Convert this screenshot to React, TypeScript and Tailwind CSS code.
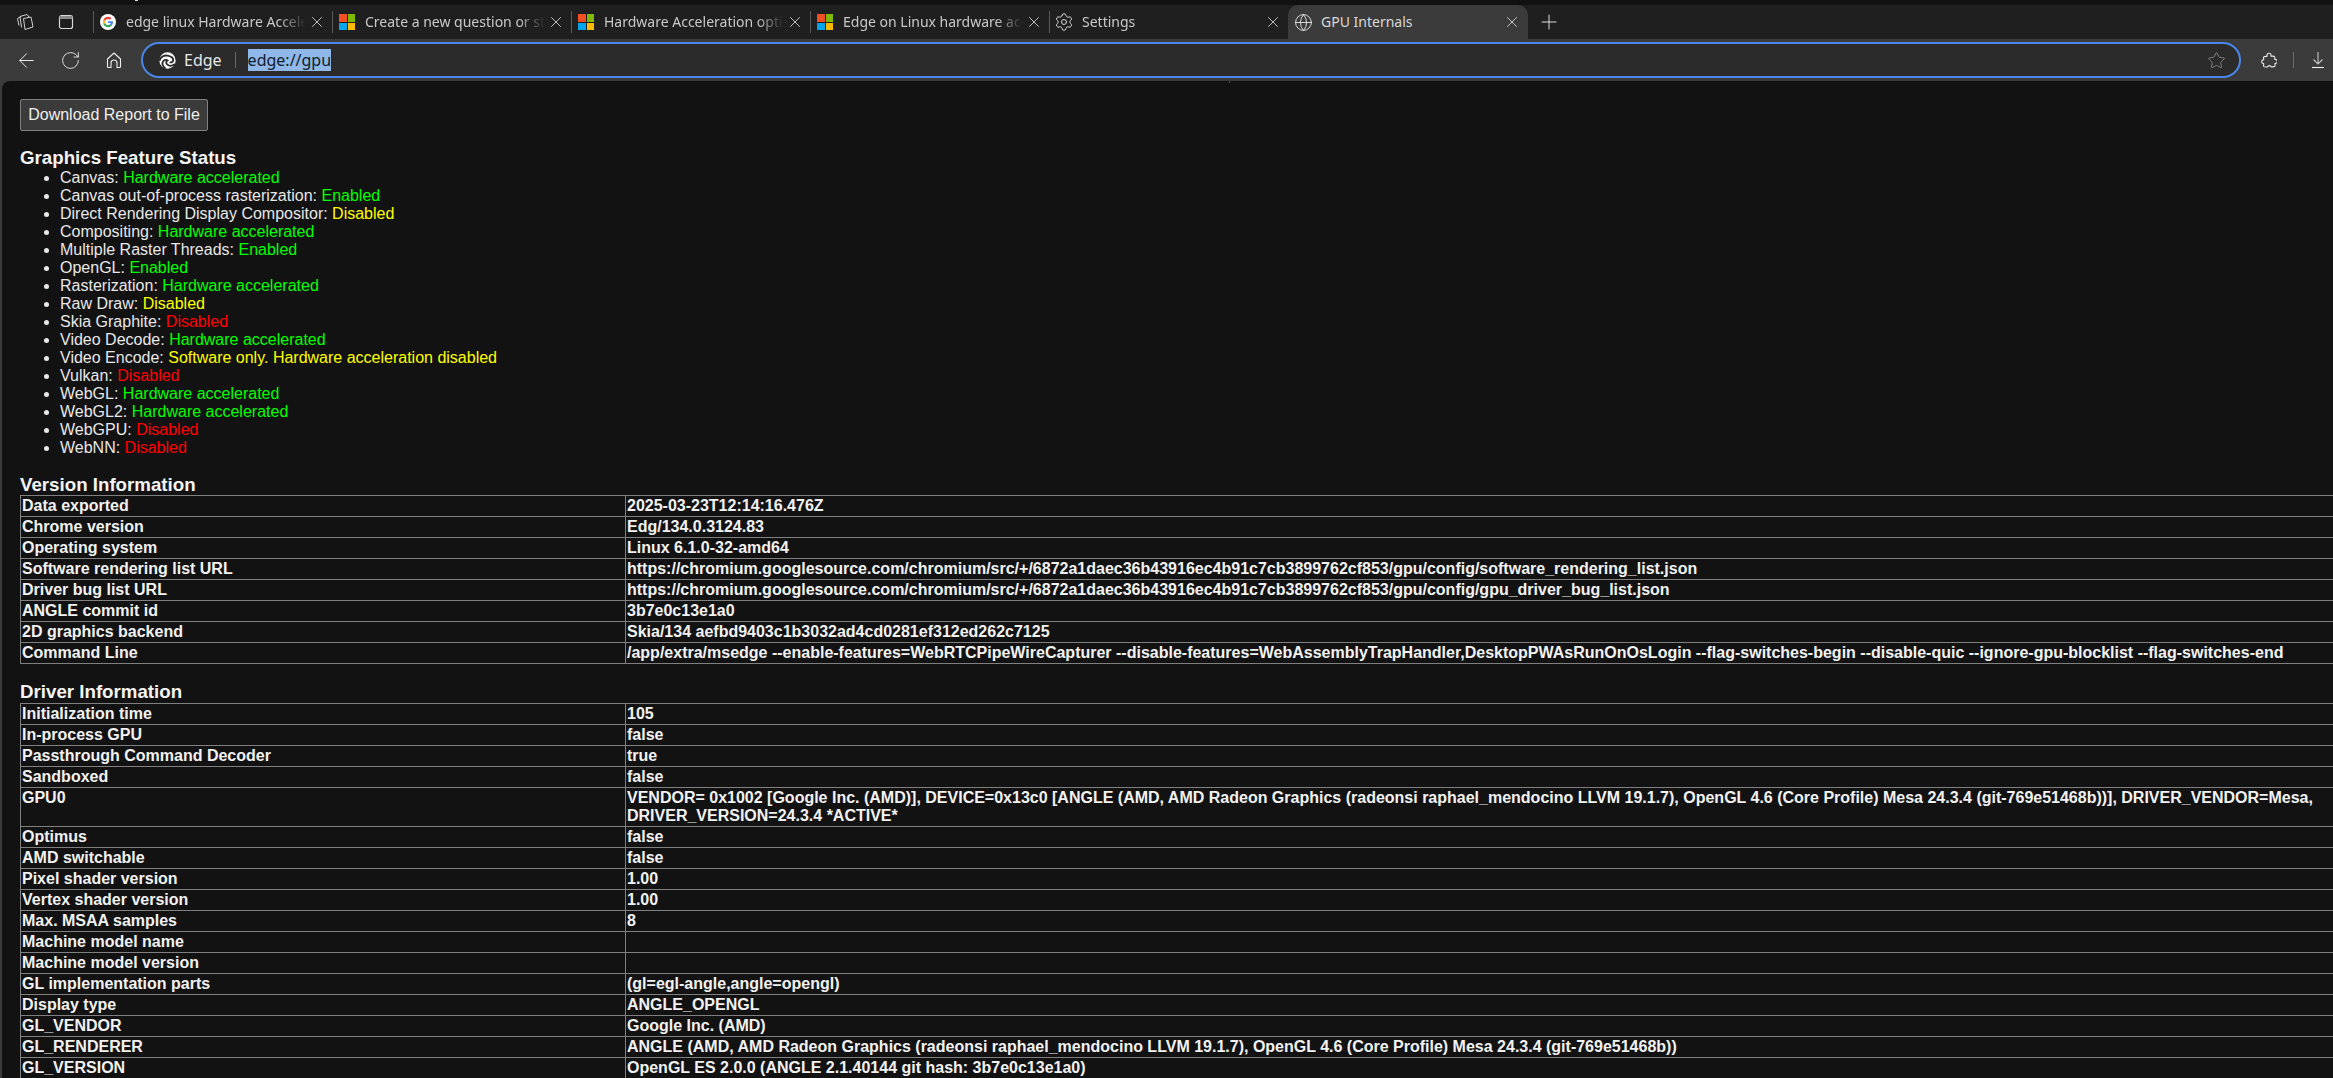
import { ArrowLeft, Globe, Plus, RotateCw, Settings, Star, X } from 'lucide-react';

const features = [
  ['Canvas', 'Hardware accelerated', 'g'],
  ['Canvas out-of-process rasterization', 'Enabled', 'g'],
  ['Direct Rendering Display Compositor', 'Disabled', 'y'],
  ['Compositing', 'Hardware accelerated', 'g'],
  ['Multiple Raster Threads', 'Enabled', 'g'],
  ['OpenGL', 'Enabled', 'g'],
  ['Rasterization', 'Hardware accelerated', 'g'],
  ['Raw Draw', 'Disabled', 'y'],
  ['Skia Graphite', 'Disabled', 'r'],
  ['Video Decode', 'Hardware accelerated', 'g'],
  ['Video Encode', 'Software only. Hardware acceleration disabled', 'y'],
  ['Vulkan', 'Disabled', 'r'],
  ['WebGL', 'Hardware accelerated', 'g'],
  ['WebGL2', 'Hardware accelerated', 'g'],
  ['WebGPU', 'Disabled', 'r'],
  ['WebNN', 'Disabled', 'r'],
];

const statusColor: Record<string, string> = {
  g: 'text-[#00ff00]',
  y: 'text-[#ffff00]',
  r: 'text-[#ff0000]',
};

const versionInfo = [
  ['Data exported', '2025-03-23T12:14:16.476Z'],
  ['Chrome version', 'Edg/134.0.3124.83'],
  ['Operating system', 'Linux 6.1.0-32-amd64'],
  ['Software rendering list URL', 'https://chromium.googlesource.com/chromium/src/+/6872a1daec36b43916ec4b91c7cb3899762cf853/gpu/config/software_rendering_list.json'],
  ['Driver bug list URL', 'https://chromium.googlesource.com/chromium/src/+/6872a1daec36b43916ec4b91c7cb3899762cf853/gpu/config/gpu_driver_bug_list.json'],
  ['ANGLE commit id', '3b7e0c13e1a0'],
  ['2D graphics backend', 'Skia/134 aefbd9403c1b3032ad4cd0281ef312ed262c7125'],
  ['Command Line', '/app/extra/msedge --enable-features=WebRTCPipeWireCapturer --disable-features=WebAssemblyTrapHandler,DesktopPWAsRunOnOsLogin --flag-switches-begin --disable-quic --ignore-gpu-blocklist --flag-switches-end'],
];

const driverInfo = [
  ['Initialization time', '105'],
  ['In-process GPU', 'false'],
  ['Passthrough Command Decoder', 'true'],
  ['Sandboxed', 'false'],
  ['GPU0', 'VENDOR= 0x1002 [Google Inc. (AMD)], DEVICE=0x13c0 [ANGLE (AMD, AMD Radeon Graphics (radeonsi raphael_mendocino LLVM 19.1.7), OpenGL 4.6 (Core Profile) Mesa 24.3.4 (git-769e51468b))], DRIVER_VENDOR=Mesa, DRIVER_VERSION=24.3.4 *ACTIVE*'],
  ['Optimus', 'false'],
  ['AMD switchable', 'false'],
  ['Pixel shader version', '1.00'],
  ['Vertex shader version', '1.00'],
  ['Max. MSAA samples', '8'],
  ['Machine model name', ''],
  ['Machine model version', ''],
  ['GL implementation parts', '(gl=egl-angle,angle=opengl)'],
  ['Display type', 'ANGLE_OPENGL'],
  ['GL_VENDOR', 'Google Inc. (AMD)'],
  ['GL_RENDERER', 'ANGLE (AMD, AMD Radeon Graphics (radeonsi raphael_mendocino LLVM 19.1.7), OpenGL 4.6 (Core Profile) Mesa 24.3.4 (git-769e51468b))'],
  ['GL_VERSION', 'OpenGL ES 2.0.0 (ANGLE 2.1.40144 git hash: 3b7e0c13e1a0)'],
];

const GoogleIcon = () => (
  <svg width="16" height="16" viewBox="0 0 48 48">
    <circle cx="24" cy="24" r="24" fill="#fff" />
    <g transform="translate(8.5 8.5) scale(0.645)">
      <path fill="#EA4335" d="M24 9.5c3.5 0 6.7 1.2 9.2 3.6l6.9-6.9C35.9 2.4 30.5 0 24 0 14.6 0 6.5 5.4 2.6 13.2l8 6.2C12.5 13.7 17.800 9.500 24 9.500z" />
      <path fill="#4285F4" d="M47 24.500c0-1.600-.1-3.100-.4-4.500H24v9h13c-.6 3-2.300 5.500-4.800 7.200l7.700 6c4.500-4.200 7.100-10.300 7.100-17.700z" />
      <path fill="#FBBC05" d="M10.600 28.600c-.5-1.400-.8-3-.8-4.600s.3-3.200.8-4.600l-8-6.200C.9 16.500 0 20.100 0 24s.9 7.500 2.600 10.800l8-6.200z" />
      <path fill="#34A853" d="M24 48c6.500 0 11.900-2.100 15.900-5.800l-7.700-6c-2.200 1.400-4.900 2.300-8.200 2.300-6.200 0-11.500-4.200-13.400-9.900l-8 6.200C6.500 42.600 14.600 48 24 48z" />
    </g>
  </svg>
);

const MsIcon = () => (
  <div className="grid h-4 w-4 grid-cols-2 gap-px">
    <div className="bg-[#f25022]" />
    <div className="bg-[#7fba00]" />
    <div className="bg-[#00a4ef]" />
    <div className="bg-[#ffb900]" />
  </div>
);

const EdgeLogo = () => (
  <svg width="17" height="17" viewBox="0 0 24 24">
    <circle cx="12" cy="12" r="11.500" fill="#fff" />
    <path d="M0.800 12.500C2 7 7 4.500 12 5c5 .6 8.500 3.500 8 7-.3 2-2.500 3-5 2.600" fill="none" stroke="#2b2b2b" strokeWidth="2.600" />
    <path d="M9 23c-4-3-5-7-3-10 1.500-2 4.500-2.500 6-1-2 1-2.500 3.500-.5 5.500 2.500 2.500 7 2.500 11-.5" fill="none" stroke="#2b2b2b" strokeWidth="2.600" />
  </svg>
);

const tabs = [
  { title: 'edge linux Hardware Acceleration', icon: <GoogleIcon /> },
  { title: 'Create a new question or start a discussion', icon: <MsIcon /> },
  { title: 'Hardware Acceleration options', icon: <MsIcon /> },
  { title: 'Edge on Linux hardware acceleration', icon: <MsIcon /> },
  { title: 'Settings', icon: <Settings size={20} strokeWidth={1.200} className="shrink-0 text-[#d6d6d6]" /> },
];

const Tab = ({ title, icon }: { title: string; icon: React.ReactNode }) => (
  <div className="flex h-[34px] w-[239px] shrink-0 items-center">
    <div className="h-[22px] w-px bg-[#5a5a5a]" />
    <div className="ml-[6px] flex h-4 w-4 items-center justify-center">{icon}</div>
    <div className="ml-[10px] w-[180px] overflow-hidden whitespace-nowrap text-[14px] text-[#c9c9c9] [mask-image:linear-gradient(to_right,black_85%,transparent_100%)]">
      {title}
    </div>
    <X size={18} strokeWidth={1.100} className="ml-[2px] shrink-0 text-[#e0e0e0]" />
  </div>
);

const InfoTable = ({ rows }: { rows: string[][] }) => (
  <table className="w-[2400px] table-fixed font-bold text-[#f2f2f2]">
    <colgroup>
      <col className="w-[605px]" />
      <col />
    </colgroup>
    <tbody>
      {rows.map(([label, value]) => (
        <tr key={label}>
          <td className="h-[21px] border border-[#808080] p-px align-top">{label}</td>
          <td className="h-[21px] border border-[#808080] p-px align-top">{value}</td>
        </tr>
      ))}
    </tbody>
  </table>
);

const App = () => {
  return (
    <div className="relative flex h-screen w-full flex-col overflow-hidden bg-[#121212] font-['Liberation_Sans',Arial,sans-serif] text-[16px] leading-[18px] text-[#e8e8e8]">
      {/* Tab strip */}
      <div className="h-[5px] shrink-0 bg-[#111111]" />
      <div className="flex h-[34px] shrink-0 items-center bg-[#1f1f1f] font-['Noto_Sans',sans-serif]">
        <div className="flex h-full w-[45px] items-center justify-center pl-[4px] text-[#cfcfcf]">
          <svg width="18" height="18" viewBox="0 0 18 18" fill="none" stroke="currentColor" strokeWidth="1" strokeLinejoin="round">
            <path d="M7.500 5.500L15 4l2 10-8 2.500z" />
            <path d="M5.500 14.500L4 3.500l7-2 2 2.500" />
            <path d="M3 12.500L1.500 5.500 5 3.500" />
          </svg>
        </div>
        <div className="flex h-full w-[42px] items-center justify-center text-[#d8d8d8]">
          <svg width="16" height="16" viewBox="0 0 16 16" fill="none" stroke="currentColor" strokeWidth="1.200">
            <rect x="1.500" y="1.500" width="13" height="13" rx="2" />
            <path d="M1.500 3.500h13" stroke="#8a8a8a" strokeWidth="3" />
          </svg>
        </div>
        <div className="w-[6px]" />
        {tabs.map(t => (
          <Tab key={t.title} title={t.title} icon={t.icon} />
        ))}
        {/* Active tab */}
        <div className="flex h-[34px] w-[240px] shrink-0 items-center rounded-t-[10px] bg-[#3b3b3b]">
          <Globe size={19} strokeWidth={1.100} className="ml-[6px] shrink-0 text-[#ededed]" />
          <div className="ml-[8px] w-[178px] overflow-hidden whitespace-nowrap text-[14px] text-[#d8d8d8]">GPU Internals</div>
          <X size={18} strokeWidth={1.100} className="ml-[4px] shrink-0 text-[#e0e0e0]" />
        </div>
        <Plus size={24} strokeWidth={0.900} className="ml-[9px] shrink-0 text-[#f0f0f0]" />
      </div>

      {/* Toolbar */}
      <div className="flex h-[42px] shrink-0 items-center bg-[#3b3b3b] pl-[4px]">
        <div className="flex w-[44px] justify-center">
          <ArrowLeft size={23} strokeWidth={1} className="text-[#f0f0f0]" />
        </div>
        <div className="flex w-[44px] justify-center">
          <RotateCw size={21} strokeWidth={1} className="text-[#eeeeee]" />
        </div>
        <div className="flex w-[44px] justify-center">
          <svg width="16" height="17" viewBox="0 0 16 17" fill="none" stroke="#f0f0f0" strokeWidth="1.100" strokeLinejoin="round">
            <path d="M1.500 7L8 1l6.500 6v7.500a1 1 0 0 1-1 1H11V11a3 3 0 0 0-6 0v4.500H2.500a1 1 0 0 1-1-1z" />
          </svg>
        </div>
        <div className="ml-[5px] flex h-[36px] flex-1 items-center rounded-full border-[2.500px] border-[#4a86e8] bg-[#2b2b2b] font-['Noto_Sans',sans-serif]">
          <div className="ml-[16px] flex w-[17px] items-center">
            <EdgeLogo />
          </div>
          <span className="ml-[8px] text-[16px] text-[#e6e6e6]">Edge</span>
          <div className="ml-[13px] h-[16px] w-px bg-[#6a6a6a]" />
          <span className="ml-[12px] bg-[#8fb7e8] text-[16px] leading-[22px] text-[#10202f]">edge://gpu</span>
          <Star size={19} strokeWidth={1.100} className="ml-auto mr-[13px] text-[#8a8a8a]" />
        </div>
        <div className="flex w-[92px] shrink-0 items-center">
          <svg width="16" height="17" viewBox="0 0 16 17" fill="none" stroke="#ededed" strokeWidth="1.100" strokeLinejoin="round" className="ml-[20px]">
            <path d="M6 3.200a2 2 0 0 1 4 0c0 .4-.2.7-.2 1 .1.300 3.400-.8 3.900.9.300 1 .1 2.300.1 2.400a2 2 0 1 1 .2 3.900c0 .3.300 2.300-.3 3-.6.700-2.900.3-3.400.5-.5-1.700-3.300-1.700-3.600 0-.8 0-3.200.4-3.900-.4-.500-.6 0-2.400-.1-2.900-.9-.1-2-.6-2-1.900 0-1.300 1.100-1.900 2-1.900 0-.6-.400-2.400.1-3 .5-.6 3-.3 3.300-.5-.1-.4-.1-.7-.1-1z" />
          </svg>
          <div className="ml-[16px] h-[16px] w-px bg-[#6a6a6a]" />
          <svg width="14" height="17" viewBox="0 0 14 17" fill="none" stroke="#c4c4c4" strokeWidth="1.100" className="ml-[17px]">
            <path d="M7 0v11.500M2.500 7.500L7 12l4.500-4.500" />
            <path d="M1 15.500h12" stroke="#f0f0f0" />
          </svg>
        </div>
      </div>

      {/* Page */}
      <div className="min-h-0 flex-1 bg-[#3b3b3b] pl-[2px]">
        <div className="h-full overflow-hidden rounded-tl-[8px] bg-[#121212] pl-[18px] pt-[18px]">
          <button className="block h-[32px] w-[188px] rounded-[2px] border border-[#808080] bg-[#3b3b3b] text-center text-[16px] text-[#eeeeee]">
            Download Report to File
          </button>
          <h3 className="mt-[16px] text-[18.720px] font-bold leading-[21px] text-[#f5f5f5]">Graphics Feature Status</h3>
          <ul className="mt-px list-disc pl-[40px]">
            {features.map(([name, value, tone]) => (
              <li key={name}>
                {name}: <span className={statusColor[tone]}>{value}</span>
              </li>
            ))}
          </ul>
          <h3 className="mt-[17px] text-[18.720px] font-bold leading-[21px] text-[#f5f5f5]">Version Information</h3>
          <InfoTable rows={versionInfo} />
          <h3 className="mt-[17px] text-[18.720px] font-bold leading-[21px] text-[#f5f5f5]">Driver Information</h3>
          <div className="mt-px">
            <InfoTable rows={driverInfo} />
          </div>
        </div>
      </div>

      {/* Stray marks from the capture */}
      <div className="absolute left-[135px] top-0 h-px w-[3px] bg-[#dddddd]" />
      <div className="absolute left-[1229px] top-[81px] h-[2px] w-px bg-[#d01010]" />
    </div>
  );
};

export default App;
